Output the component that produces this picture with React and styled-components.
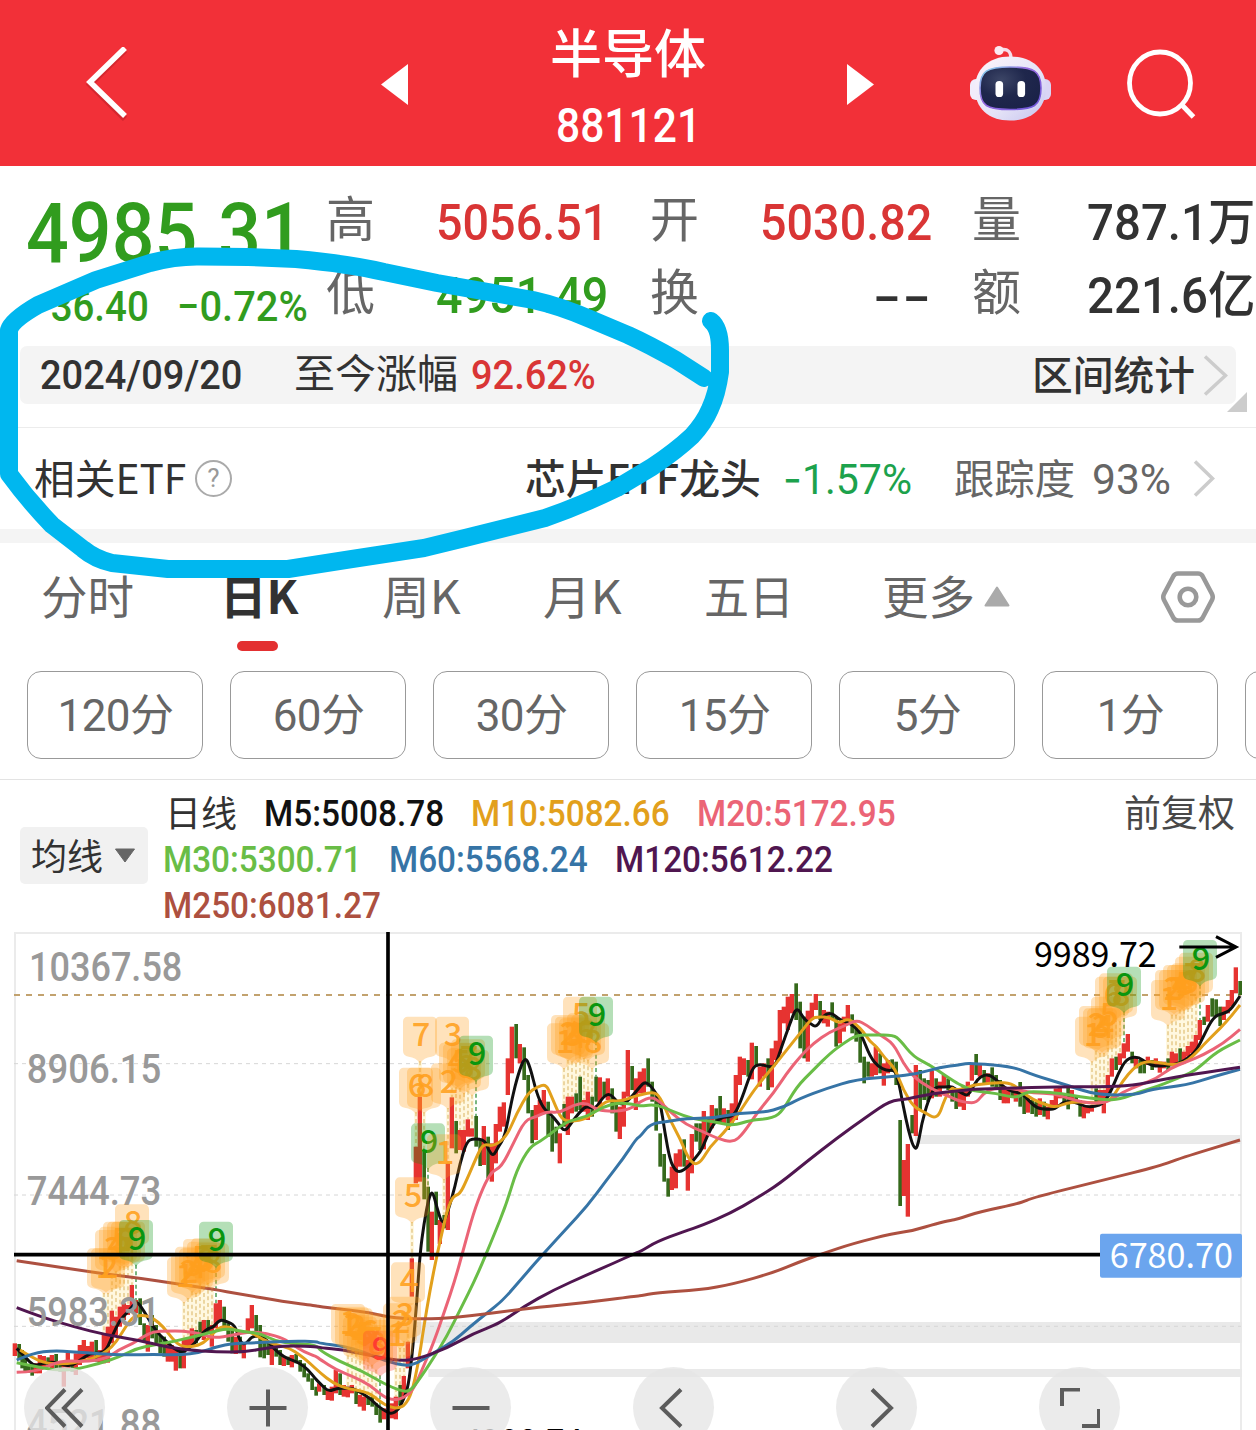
import React, { useLayoutEffect, useRef, useState } from "react";
import styled, { createGlobalStyle, css } from "styled-components";

const colours = {
  brand: "#f23038",
  up: "#d93535",
  down: "#319c1e",
  etfDown: "#1ca24c",
  text: "#323232",
  muted: "#666",
  faint: "#999",
  panel: "#f4f4f4",
};

const cjk = `"Noto Sans CJK SC", sans-serif`;
const din = `Roboto, "Noto Sans CJK SC", sans-serif`;

const GlobalStyle = createGlobalStyle`
  * {
    box-sizing: border-box;
  }

  body {
    margin: 0;
    background: #fff;
    overflow: hidden;
  }

  svg {
    display: block;
  }
`;

const Screen = styled.main`
  position: relative;
  width: 1256px;
  height: 1430px;
  overflow: hidden;
  color: ${colours.text};
  font-family: ${din};
`;

/* Condensed text: squeezed horizontally to fill exactly the width of its slot */
const FitSlot = styled.span`
  display: block;
  flex: none;
  width: ${({ $w }) => $w}px;
  white-space: nowrap;
`;

const FitInner = styled.span`
  display: inline-block;
  transform-origin: 0 50%;
`;

const Fit = ({ w, children, className }) => {
  const ref = useRef(null);
  const [scale, setScale] = useState(1);

  useLayoutEffect(() => {
    setScale(w / ref.current.offsetWidth);
  }, [w, children]);

  return (
    <FitSlot $w={w} className={className}>
      <FitInner ref={ref} style={{ transform: `scaleX(${scale})` }}>
        {children}
      </FitInner>
    </FitSlot>
  );
};

const Dash = styled.span`
  font-family: Inter, sans-serif;
`;

/* ---------- header ---------- */

const Header = styled.header`
  display: grid;
  grid-template-columns: 295px 147px 319px 123px 157px 1fr;
  align-items: center;
  height: 166px;
  padding: 2px 0 0 86px;
  background: ${colours.brand};
`;

const TitleBlock = styled.div`
  width: 200px;
  height: 164px;
  padding-top: 14px;
  display: flex;
  flex-direction: column;
  align-items: center;
  color: #fff;
`;

const Title = styled.h1`
  margin: 0;
  font: 500 52px/70px ${cjk};
`;

const Code = styled(Fit)`
  font-size: 49px;
  font-weight: 500;
  line-height: 80px;
`;

const Robot = () => (
  <svg width="81" height="78" viewBox="970 44 81 78">
    <defs>
      <linearGradient id="shell" x1="0" y1="0" x2="1" y2="1">
        <stop offset="0" stopColor="#fdf5fb" />
        <stop offset="0.6" stopColor="#e4e2f7" />
        <stop offset="1" stopColor="#c5c3ee" />
      </linearGradient>
      <linearGradient id="rim" x1="0" y1="0" x2="1" y2="1">
        <stop offset="0" stopColor="#7fe0ee" />
        <stop offset="0.4" stopColor="#9a6be0" />
        <stop offset="1" stopColor="#6a55d8" />
      </linearGradient>
      <radialGradient id="visor" cx="0.35" cy="0.3" r="0.8">
        <stop offset="0" stopColor="#3c4566" />
        <stop offset="0.5" stopColor="#1f274c" />
        <stop offset="1" stopColor="#1a2148" />
      </radialGradient>
    </defs>
    <path d="M1000 49 C1008 47 1011 51 1011 58" fill="none" stroke="#f6dcea" strokeWidth="3.4" />
    <circle cx="999" cy="49.500" r="4.600" fill="#fbe9f2" />
    <rect x="970" y="78" width="14" height="21" rx="6" fill="#f1ecfb" />
    <rect x="1037" y="78" width="14" height="21" rx="6" fill="#d9d5f5" />
    <path
      d="M1010 55.500 C1033 55.500 1046 69 1046 87 C1046 107 1032 119.500 1010 119.500 C988 119.500 975 107 975 87 C975 69 988 55.500 1010 55.500Z"
      fill="url(#shell)"
    />
    <path
      d="M1010 66 C1034 66 1041 70 1041 87 C1041 105 1034 108.500 1010 108.500 C987 108.500 980 105 980 87 C980 70 987 66 1010 66Z"
      fill="url(#visor)"
      stroke="url(#rim)"
      strokeWidth="1.600"
    />
    <rect x="995.500" y="80" width="7.600" height="16" rx="3.600" fill="#fff" />
    <rect x="1017.500" y="80" width="7.600" height="16" rx="3.600" fill="#fff" />
  </svg>
);

const TopBar = () => (
  <Header>
    <svg width="42" height="74" viewBox="0 1 42 74">
      <path d="M39 2 L4 36.500 L39 71" fill="none" stroke="#a01820" strokeOpacity="0.35" strokeWidth="6" transform="translate(0 2)" />
      <path d="M39 2 L4 36 L39 70" fill="none" stroke="#fff" strokeWidth="5.500" />
    </svg>
    <svg width="27" height="41" viewBox="0 0 27 41">
      <path d="M27 0 V41 L0 20.500Z" fill="#fff" />
    </svg>
    <TitleBlock>
      <Title>半导体</Title>
      <Code w={145}>881121</Code>
    </TitleBlock>
    <svg width="27" height="41" viewBox="0 0 27 41">
      <path d="M0 0 V41 L27 20.500Z" fill="#fff" />
    </svg>
    <Robot />
    <svg width="70" height="70" viewBox="0 0 70 70">
      <ellipse cx="33" cy="34" rx="30.500" ry="31" fill="none" stroke="#fff" strokeWidth="4.800" />
      <path d="M54 55 L66.500 68" stroke="#fff" strokeWidth="5" />
    </svg>
  </Header>
);

/* ---------- quote ---------- */

const QuoteGrid = styled.section`
  display: grid;
  grid-template-columns: 300px 324px 322px 284px;
  height: 180px;
  padding-left: 26px;
`;

const PriceColumn = styled.div`
  padding-top: 31px;
  color: ${colours.down};
  font-weight: 500;
  line-height: 74px;
`;

const Price = styled(Fit)`
  font-size: 84px;
`;

const ChangeRow = styled.div`
  display: flex;
  gap: 28px;
  margin-top: -1px;
  padding-left: 3px;
  font-size: 42px;
`;

const StatColumn = styled.dl`
  display: grid;
  grid-template-columns: ${({ $label }) => $label}px 1fr;
  grid-auto-rows: 73px;
  margin: 0;
  padding-top: 20px;
`;

const StatLabel = styled.dt`
  color: ${colours.muted};
  font: 400 49px/60px ${cjk};
`;

const StatValue = styled.dd`
  display: flex;
  justify-content: flex-end;
  width: 172px;
  margin: 0;
  color: ${({ $tone }) => colours[$tone]};
  font-size: 50.5px;
  font-weight: 500;
  line-height: 73px;
`;

const statColumns = [
  { label: 110, rows: [["高", "5056.51", "up", 172], ["低", "4951.49", "down", 172]] },
  { label: 110, rows: [["开", "5030.82", "up", 172], ["换", "--", "text", 60]] },
  { label: 111, rows: [["量", "787.1万", "text", 168], ["额", "221.6亿", "text", 168]] },
];

const Quote = () => (
  <QuoteGrid>
    <PriceColumn>
      <Price w={278}>4985.31</Price>
      <ChangeRow>
        <Fit w={120}>−36.40</Fit>
        <Fit w={131}>−0.72%</Fit>
      </ChangeRow>
    </PriceColumn>
    {statColumns.map(({ label, rows }) => (
      <StatColumn key={rows[0][0]} $label={label}>
        {rows.map(([name, value, tone, w]) => (
          <React.Fragment key={name}>
            <StatLabel>{name}</StatLabel>
            <StatValue $tone={tone}>
              <Fit w={w}>{value === "--" ? <Dash>{value}</Dash> : value}</Fit>
            </StatValue>
          </React.Fragment>
        ))}
      </StatColumn>
    ))}
  </QuoteGrid>
);

/* ---------- interval + ETF rows ---------- */

const IntervalBar = styled.section`
  position: relative;
  display: flex;
  align-items: center;
  height: 58px;
  margin: 0 20px;
  padding: 0 8px 0 20px;
  border-radius: 7px;
  background: ${colours.panel};
  font-size: 41px;
  font-weight: 500;
  line-height: 55px;
`;

const IntervalLabel = styled(Fit)`
  margin: -7px 13px 0 52px;
  font: 400 40px/51px ${cjk};
`;

const IntervalChange = styled(Fit)`
  color: ${colours.up};
`;

const IntervalLink = styled(Fit)`
  margin: -4px 8px 0 auto;
  font: 500 40px/51px ${cjk};
`;

const Corner = styled.i`
  position: absolute;
  right: -11px;
  bottom: -8px;
  border: 10px solid #ccc;
  border-top-color: transparent;
  border-left-color: transparent;
`;

const Chevron = ({ w, h }) => (
  <svg width={w} height={h} viewBox={`0 0 ${w} ${h}`}>
    <path d={`M2 1.500 L${w - 2.5} ${h / 2} L2 ${h - 1.5}`} fill="none" stroke="#ccc" strokeWidth="3.500" />
  </svg>
);

const EtfRow = styled.section`
  display: grid;
  grid-template-columns: 161px 330px 258px 171px 138px 101px auto;
  align-items: center;
  height: 102px;
  margin-top: 23px;
  padding-left: 34px;
  border-top: 1px solid #ececec;
  font-size: 42px;
`;

const EtfText = styled(Fit)`
  margin-top: -6px;
  color: ${({ $muted }) => ($muted ? colours.muted : colours.text)};
  font: ${({ $bold }) => ($bold ? 500 : 400)} 41px/60px ${cjk};
`;

const EtfNumber = styled(Fit)`
  color: ${({ $down }) => ($down ? colours.etfDown : colours.muted)};
  padding-top: 2px;
  line-height: 60px;
`;

const Help = styled.span`
  display: grid;
  place-items: center;
  width: 37px;
  height: 37px;
  border: 2px solid #aaa;
  border-radius: 50%;
  color: #999;
  font-size: 26px;
  line-height: 33px;
`;

const Band = styled.div`
  height: 14px;
  background: ${colours.panel};
`;

/* ---------- tabs ---------- */

const Tabs = styled.nav`
  display: grid;
  grid-template-columns: 179px 162px 161px 161px 178px 278px auto;
  height: 128px;
  padding: 6px 0 0 41px;
`;

const Tab = styled.div`
  display: flex;
  flex-wrap: wrap;
  align-content: flex-start;
  align-items: center;
  color: ${colours.muted};
  font: 400 46px/90px ${cjk};

  svg {
    margin: 4px 0 0 9px;
  }

  ${({ $active }) =>
    $active &&
    css`
      color: ${colours.text};
      font-weight: 700;

      &::after {
        content: "";
        width: 41px;
        height: 10px;
        margin: 2px 60px 0 17px;
        border-radius: 5px;
        background: #e33031;
      }
    `}
`;

const tabs = [["分时", 93], ["日K", 79], ["周K", 79], ["月K", 79], ["五日", 90], ["更多", 93]];

const Settings = styled.div`
  padding-top: 21px;
`;

const Periods = styled.div`
  display: flex;
  gap: 27px;
  padding: 0 0 20px 27px;
  border-bottom: 1px solid #e3e3e3;
  overflow: hidden;
`;

const Period = styled.button`
  flex: 0 0 176px;
  height: 88px;
  padding: 3px 0 0 1px;
  border: 1px solid #999;
  border-radius: 14px;
  background: #fff;
  color: ${colours.muted};
  font: 400 44px/83px ${din};
  letter-spacing: -0.6px;
`;

const periods = ["120分", "60分", "30分", "15分", "5分", "1分", ""];

/* ---------- moving average legend ---------- */

const Legend = styled.section`
  display: grid;
  grid-template-columns: 143px 1fr auto;
  height: 140px;
  padding: 0 21px 0 20px;
`;

const MaSelect = styled.div`
  display: flex;
  align-items: center;
  gap: 11px;
  width: 128px;
  height: 57px;
  margin-top: 47px;
  padding-left: 11px;
  border-radius: 5px;
  background: #f1f1f1;
  font: 400 36px/52px ${cjk};
`;

const MaLabel = styled(Fit)`
  margin-top: -3px;
`;

const MaRows = styled.div`
  padding-top: 10px;
`;

const MaRow = styled.div`
  display: flex;
  gap: 27px;
  height: 46px;
  font-size: 37.5px;
  font-weight: 500;
  line-height: 46px;
`;

const MaName = styled(Fit)`
  margin-left: 2px;
  font: 400 36px/42px ${cjk};
`;

const MaValue = styled(Fit)`
  color: ${({ $colour }) => $colour};
`;

const Adjust = styled(Fit)`
  padding-top: 10px;
  color: #484848;
  font: 400 37px/43px ${cjk};
`;

const maColours = {
  m5: "#111",
  m10: "#e2a01c",
  m20: "#eb6476",
  m30: "#69bd46",
  m60: "#3674a6",
  m120: "#501650",
  m250: "#ad5040",
};

const maRows = [
  [["M5:5008.78", "m5", 180], ["M10:5082.66", "m10", 199], ["M20:5172.95", "m20", 199]],
  [["M30:5300.71", "m30", 199], ["M60:5568.24", "m60", 199], ["M120:5612.22", "m120", 218]],
  [["M250:6081.27", "m250", 218]],
];

/* ---------- chart ---------- */

// The chart is kept in four pages; each page has its own x origin.
// Candles are "x:high-low" followed by r (up) or g (down).
const pages = [
  {
    x: 0,
    candles:
      "45:1270-1308r 57:1272-1320g 66:1290-1345g 75:1310-1355g 85:1335-1358g 96:1330-1367g 108:1330-1360r 120:1305-1360r 132:1308-1340r 144:1312-1340g 156:1305-1345r 168:1302-1345g 180:1325-1355g 192:1330-1400r 204:1298-1350r 216:1325-1355g 228:1300-1365r 240:1275-1335r 252:1260-1320r 264:1278-1315r 276:1265-1325r 288:1260-1325g 300:1290-1330r 312:1240-1330r 324:1220-1328r 336:1172-1270r 348:1190-1245r 360:1160-1220r 372:1150-1200r 384:1155-1185r 396:1095-1170r 408:1140-1180r 420:1135-1215g 432:1210-1265g 444:1215-1295r 456:1185-1255g 468:1215-1275g 480:1245-1300g 492:1250-1310g 504:1265-1325r 516:1275-1325r 528:1290-1352r 540:1290-1345g 552:1260-1345r 564:1255-1285r 576:1225-1275r 588:1230-1270g 600:1205-1250g 612:1200-1260r 624:1200-1240g 636:1215-1280r 648:1150-1225r 660:1140-1200r 672:1160-1225g 684:1210-1265g 696:1225-1300g 708:1250-1302r 720:1250-1300g 732:1270-1315r 744:1195-1240r 756:1155-1225r 768:1185-1250g 780:1215-1312g 792:1250-1315g 804:1265-1305g 816:1270-1335r 828:1275-1310g 840:1290-1335g 852:1310-1338r 864:1310-1335g 876:1305-1342r 888:1302-1330g 900:1320-1355g 912:1330-1372g 924:1360-1385g 936:1375-1410g 948:1400-1427g 958:1390-1415r",
    m5: "50,1285 75,1310 100,1338 130,1330 160,1325 190,1335 215,1338 240,1320 270,1300 300,1300 320,1290 340,1240 360,1200 380,1180 400,1155 412,1145 430,1170 450,1205 470,1235 490,1255 520,1285 545,1298 560,1290 585,1270 605,1240 625,1225 640,1222 660,1198 680,1205 705,1215 720,1265 735,1275 755,1250 775,1248 800,1258 820,1285 850,1310 875,1320 900,1330 925,1350 945,1375",
    m10: "60,1290 100,1315 140,1330 200,1332 240,1325 280,1315 320,1295 350,1265 380,1215 400,1190 430,1185 460,1195 490,1220 520,1260 545,1280 580,1280 610,1270 640,1240 660,1220 690,1220 720,1238 750,1235 790,1260 830,1275 870,1285 900,1305 930,1330",
    m20: "50,1357 110,1355 160,1330 200,1322 260,1325 320,1315 355,1290 400,1270 430,1250 460,1235 500,1233 550,1233 600,1240 640,1255 700,1245 750,1235 800,1240 850,1255 880,1275 910,1295 950,1310",
    m30: "50,1328 100,1338 160,1350 220,1350 300,1330 360,1310 410,1285 460,1275 520,1265 580,1250 630,1238 680,1225 730,1235 780,1240 830,1265 880,1270 950,1275",
    m60: "50,1320 100,1298 160,1292 220,1295 300,1302 380,1305 460,1303 540,1305 600,1298 650,1280 700,1270 780,1268 880,1263 950,1265",
    m120: "50,1163 120,1190 220,1220 320,1245 420,1262 500,1280 560,1290 650,1296 740,1296 820,1280 880,1277 950,1280",
    m250: "50,1022 150,1037 300,1060 420,1075 520,1090 640,1108 720,1122 850,1145 950,1158",
  },
  {
    x: 960,
    candles:
      "12:1395-1425g 24:1410-1440r 36:1400-1442r 48:1350-1420r 60:1360-1425g 72:1395-1430r 84:1400-1432r 96:1395-1420r 108:1410-1452g 120:1425-1460r 132:1430-1472r 144:1430-1455g 156:1430-1460g 168:1450-1485g 180:1465-1508g 192:1465-1498r 216:1450-1495r 228:1430-1498r 240:1395-1455g 252:1368-1430r 264:1265-1345r 276:1015-1130r 288:680-790r 300:530-785r 312:690-838g 324:800-995g 336:875-1020r 348:815-915g 360:900-972r 372:885-925g 384:730-930r 396:532-685r 408:603-700g 420:630-690r 432:630-695r 444:598-650r 456:625-650r 468:588-680g 480:660-738g 492:618-735r 504:650-775g 516:670-785r 528:612-730r 540:560-635r 552:547-620r 564:415-525r 576:320-460r 588:312-415g 600:372-430r 612:382-480g 624:465-580g 636:570-670g 648:555-660r 660:540-585r 672:510-580r 684:545-650g 696:590-695g 708:620-670g 720:640-730r 732:552-620g 744:530-645r 756:530-580r 768:520-575g 780:470-570g 792:540-575r 804:515-600r 816:530-590g 828:470-545g 840:472-560r 852:485-530g 864:475-540r 876:505-580g 888:540-635g 900:560-657r 912:515-620r 924:390-530r 936:438-510g 948:475-570r",
    m5: "0,1390 25,1415 50,1405 75,1405 100,1405 125,1420 150,1435 175,1460 200,1475 215,1482 235,1470 250,1440 265,1400 278,1290 290,1150 300,1000 312,910 325,840 337,810 350,860 368,918 385,870 405,800 420,730 440,665 460,655 495,660 505,690 520,709 535,680 555,650 575,540 595,460 615,409 630,440 650,520 670,565 690,580 715,610 735,637 760,600 785,570 800,558 825,568 850,530 870,520 890,545 910,555 935,530",
    m10: "0,1358 40,1390 80,1405 110,1410 150,1420 180,1445 210,1462 235,1465 255,1455 275,1420 295,1330 310,1230 330,1110 350,1010 370,920 385,860 400,828 420,822 440,780 470,710 490,670 520,680 560,650 590,580 625,518 650,502 678,492 695,530 720,590 740,605 790,600 820,580 860,540 900,545 940,530",
    m20: "0,1318 50,1350 100,1370 150,1395 190,1430 220,1440 250,1435 280,1410 310,1340 340,1270 375,1170 405,1080 430,990 460,880 490,800 515,755 545,740 580,670 615,600 650,590 680,575 720,578 760,555 800,548 830,570 880,575 930,568",
    m30: "0,1292 60,1325 130,1355 190,1390 240,1412 270,1415 300,1375 340,1315 380,1250 420,1170 470,1070 520,950 560,850 590,750 630,680 660,665 700,635 740,605 800,590 850,560 900,547 950,555",
    m60: "0,1270 70,1278 130,1295 200,1325 260,1338 290,1330 330,1305 400,1265 450,1220 500,1180 550,1140 610,1070 680,990 740,925 800,860 860,780 910,715 950,655",
    m120: "0,1283 70,1290 120,1300 180,1312 240,1322 290,1318 380,1285 460,1240 540,1210 610,1160 700,1110 800,1065 880,1030 950,998",
    m250: "0,1160 80,1170 150,1178 220,1195 350,1197 450,1188 550,1175 650,1162 800,1148 950,1128",
  },
  {
    x: 1920,
    candles:
      "0:455-520r 12:445-520r 24:415-500g 36:485-545g 48:520-632g 60:640-740g 72:702-785g 84:775-830g 96:740-810r 108:700-805r 120:688-740r 132:658-740g 144:720-812r 156:642-760r 168:610-665g 180:610-690g 192:573-688r 204:595-640g 216:555-625r 228:565-605g 240:528-610g 252:565-610r 264:570-630g 276:550-610r 288:465-600r 300:410-495r 312:415-465r 324:420-470g 336:368-478r 348:378-440g 360:440-500r 372:430-470r 384:415-510g 396:385-502r 408:362-420r 420:270-400r 432:260-310r 444:230-330r 456:222-280r 468:190-300g 480:245-385g 492:290-415g 504:272-425r 516:248-300r 528:222-270r 540:243-300g 552:270-310r 564:275-320r 576:247-300g 588:290-380g 600:310-370r 612:290-335r 624:255-310r 636:283-340g 648:320-365g 660:330-428g 672:410-490g 684:425-470g 696:430-470r 708:380-465r 720:400-460g 732:430-497r 744:420-460r 756:418-455g 768:425-495g 780:600-858g 792:720-828r 804:672-890r 816:585-640g 828:435-648r 840:450-570g 852:475-540g 864:480-545g 876:452-535r 888:475-530g 900:485-530r 912:465-500r 924:475-510g 936:500-545g 948:510-567g",
    m5: "0,500 15,485 35,500 60,540 75,640 90,720 105,750 120,757 145,740 165,715 185,690 205,640 225,605 250,590 280,590 300,550 325,480 340,440 360,432 385,440 405,440 425,380 450,310 470,259 490,295 510,310 530,323 550,285 575,278 600,300 620,305 645,320 665,345 690,410 715,440 740,452 765,450 775,480 790,560 805,630 820,682 832,687 845,610 865,540 885,500 910,502 935,498",
    m10: "0,525 45,515 65,540 90,600 120,655 145,715 165,735 185,722 210,680 250,640 290,590 335,520 370,475 400,440 440,390 480,340 515,295 535,290 570,292 595,310 625,295 650,315 670,335 690,365 710,380 735,415 765,445 790,510 820,560 850,575 892,600 915,535 935,502",
    m20: "0,545 35,530 60,545 90,575 140,615 190,635 230,655 280,668 310,640 350,580 400,520 440,460 480,410 520,370 570,335 620,315 650,300 680,315 720,345 760,370 790,430 820,470 870,505 930,530",
    m30: "0,558 50,553 100,575 160,597 220,605 280,618 330,600 400,595 430,570 470,500 520,450 570,400 610,370 650,345 700,345 760,345 780,360 820,410 870,435 920,470 960,495",
    m60: "0,650 30,612 80,605 140,595 220,595 300,578 370,578 430,562 480,535 560,505 650,478 760,470 830,462 900,442 960,434",
    m120: "0,995 50,965 130,935 190,915 270,880 350,835 420,790 500,725 590,655 680,590 750,542 800,538 880,520 960,512",
    m250: "0,1128 50,1118 180,1110 280,1092 400,1058 480,1025 550,1000 640,970 760,940 820,932 890,910 935,900",
  },
  {
    x: 2820,
    candles:
      "60:510-560r 72:500-570r 84:485-530r 96:430-482r 108:402-465g 120:430-470r 132:450-490g 144:460-490r 156:442-500g 168:465-510g 180:480-540g 192:500-550r 204:510-550r 216:500-530g 228:510-545r 240:486-560g 252:530-582g 264:530-578r 276:540-582g 288:545-590g 300:535-585r 312:545-590g 324:560-598r 336:540-570r 348:505-560r 360:500-535r 372:520-550g 384:500-568g 396:510-550r 408:530-550g 420:540-590g 432:560-595r 444:560-580r 456:555-575r 468:505-550g 480:510-550r 492:510-580r 504:465-530r 516:415-470r 528:410-450g 540:400-435r 552:370-415r 564:342-395r 576:395-430g 588:410-445r 600:420-460g 612:420-460g 624:410-435r 636:420-450g 648:415-440r 660:425-458r 672:425-445r 684:415-450g 696:395-430r 708:400-430r 720:385-430g 732:395-425r 744:378-410r 756:365-400r 768:345-390r 780:300-360r 792:290-315g 804:255-305r 816:235-290g 828:238-290g 840:260-318g 852:260-300r 864:240-280r 876:210-260r 888:142-220r 900:183-225g",
    m5: "65,520 85,528 105,490 120,470 145,462 170,480 195,505 220,515 245,520 265,540 290,565 320,568 345,568 370,545 395,545 415,550 435,560 465,560 490,550 510,520 535,460 560,415 595,410 620,430 650,440 690,435 720,430 750,410 770,390 790,350 820,290 850,280 870,272 900,228",
    m10: "45,510 80,505 100,495 130,492 170,487 215,490 245,515 280,540 320,555 350,562 380,548 420,545 470,550 500,545 520,530 550,480 580,445 610,425 650,425 690,435 730,430 760,408 790,375 820,345 860,305 900,255",
    m20: "50,540 80,548 110,548 130,520 160,505 220,505 280,520 340,520 400,540 450,550 500,548 550,515 600,495 650,475 690,445 740,425 790,405 850,370 900,328",
    m30: "70,498 95,512 170,520 230,535 260,515 300,515 360,520 420,530 490,540 540,538 600,515 650,500 700,480 750,460 780,440 830,395 900,360",
    m60: "75,431 100,430 220,440 280,465 380,495 470,525 590,525 630,508 740,495 820,470 900,448",
    m120: "100,508 200,505 350,500 480,500 580,497 660,480 760,462 900,442",
    m250: "50,898 120,875 240,850 280,832 500,778 660,738 720,715 900,660",
  },
];

// Sequence markers 1-9: x of the first one, then the top of each, 12 units apart
const sequences = [
  { x: 312, tops: [985, 985, 930, 920, 905, 905, 905, 853, 900] },
  { x: 552, tops: [1012, 1000, 980, 985, 957, 965, 955, 970, 905] },
  { x: 1044, tops: [1152, 1160, 1165, 1190, 1185, 1180, 1200, 1215, 1232], last: "#ff3b30" },
  { x: 1188, tops: [1190, 1150, 1130, 1027, 772, 443, 290, 443, 610] },
  { x: 1332, tops: [643, 430, 290, 368, 370, 385, 358, 390, 347] },
  { x: 1692, tops: [310, 285, 290, 295, 230, 280, 285, 310, 230] },
  { x: 3276, tops: [290, 258, 265, 265, 230, 170, 160, 170, 140] },
  { x: 3504, tops: [180, 150, 150, 135, 135, 130, 110, 98, 60] },
];

const candles = pages.flatMap((page) =>
  page.candles.split(" ").map((item) => {
    const [, x, high, low, dir] = item.match(/(\d+):(\d+)-(\d+)([rg])/);
    return { x: page.x + Number(x), high: Number(high), low: Number(low), up: dir === "r" };
  })
);

const linePoints = (key) =>
  pages.flatMap((page) =>
    page[key].split(" ").map((pair) => {
      const [x, y] = pair.split(",").map(Number);
      return [page.x + x, y];
    })
  );

// Rounds the corners by running quadratics through the midpoints
const smoothPath = (points) => {
  let d = `M${points[0]}`;
  for (let i = 1; i < points.length - 1; i++) {
    const [x, y] = points[i];
    const [nx, ny] = points[i + 1];
    d += ` Q${x} ${y} ${(x + nx) / 2} ${(y + ny) / 2}`;
  }
  return `${d} L${points[points.length - 1]}`;
};

const highAt = (x) => {
  const near = candles.find((c) => Math.abs(c.x - x) < 7);
  return near ? near.high : 0;
};

const ChartArea = styled.section`
  position: relative;
  height: 510px;
`;

const AxisText = styled.text`
  fill: #999;
  font: 500 121px ${din};
`;

const PlainText = styled.text`
  fill: ${({ $colour }) => $colour};
  font: 400 103px ${cjk};
`;

const MarkerText = styled.text`
  font: 500 98px ${cjk};
  text-anchor: middle;
`;

const Marker = ({ x, top, n, last }) => {
  const final = n === 9;
  const fill = final ? last || "#0a960f" : "#ffa01e";
  return (
    <g>
      <path
        d={`M${x - 37} ${top} h74 a14 14 0 0 1 14 14 v88 q0 15 -17 18 q-22 3 -34 19 q-12 -16 -34 -19 q-17 -3 -17 -18 v-88 a14 14 0 0 1 14 -14Z`}
        fill={fill}
        fillOpacity="0.3"
      />
      <MarkerText x={x + 3} y={top + 89} fill={fill} fillOpacity={final ? 1 : 0.9}>
        {n}
      </MarkerText>
    </g>
  );
};

const axis = [
  ["10367.58", 87, 183, 460],
  ["8906.15", 80, 489, 404],
  ["7444.73", 80, 855, 404],
  ["5983.31", 80, 1217, 400],
  ["4521.88", 80, 1553, 404],
];

const markers = sequences.flatMap(({ x, tops, last }) =>
  tops.map((top, i) => ({ x: x + i * 12, top, n: i + 1, last }))
);

const Plot = () => (
  <svg width="1256" height="510" viewBox="0 0 3768 1530">
    <path d="M45 1530 V39 H3723 V1530" fill="none" stroke="#ebebeb" strokeWidth="6" />
    <g fill="#e9e9e9">
      <rect x="2745" y="645" width="981" height="27" />
      <rect x="1245" y="1206" width="2481" height="63" />
      <rect x="1285" y="1347" width="2441" height="24" />
    </g>
    <g stroke="#d6d6d6" strokeWidth="3" strokeDasharray="12 12">
      <path d="M42 431 H3723" />
      <path d="M42 825 H3723" />
      <path d="M42 1219 H3723" />
    </g>
    <path d="M42 225 H3723" stroke="#c2a26e" strokeWidth="6" strokeDasharray="18 18" />

    {markers.map(({ x, top, n }) => (
      <g key={`${x}-${n}`}>
        {n < 9 && (
          <path d={`M${x} ${top + 134} V${Math.max(highAt(x), top + 134)}`} stroke="#fff8e0" strokeWidth="12" />
        )}
        <path
          d={`M${x} ${top + 134} V${Math.max(highAt(x), top + 134)}`}
          stroke={n === 9 ? "#5fa868" : "#e9cf94"}
          strokeWidth="5"
          strokeDasharray="12 8"
        />
      </g>
    ))}

    {candles.map(({ x, high, low, up }) => (
      <rect
        key={x}
        x={up ? x - 7 : x - 5}
        y={high}
        width={up ? 13 : 11}
        height={low - high}
        fill={up ? "#e63331" : "#35691b"}
      />
    ))}

    <g fill="none" strokeWidth="9" strokeLinejoin="round">
      {Object.keys(maColours).map((key) => (
        <path key={key} d={smoothPath(linePoints(key))} stroke={maColours[key]} />
      ))}
    </g>

    {axis.map(([label, x, y, length]) => (
      <AxisText key={label} x={x} y={y} textLength={length} lengthAdjust="spacingAndGlyphs">
        {label}
      </AxisText>
    ))}

    {markers.map((marker) => (
      <Marker key={`${marker.x}-${marker.n}`} {...marker} />
    ))}

    <PlainText $colour="#000" x="3102" y="142" textLength="368" lengthAdjust="spacingAndGlyphs">
      9989.72
    </PlainText>
    <path d="M3538 81 H3706 M3648 50 L3708 81 L3648 112" fill="none" stroke="#000" strokeWidth="9" />
    <PlainText $colour="#000" x="1389" y="1602" textLength="360" lengthAdjust="spacingAndGlyphs">
      4908.74
    </PlainText>

    <path d="M1164 36 V1530" stroke="#000" strokeWidth="11" />
    <path d="M42 1004 H3723" stroke="#000" strokeWidth="11" />
    <rect x="3300" y="941" width="426" height="132" rx="6" fill="#6ba5ee" />
    <PlainText $colour="#fff" x="3329" y="1043" textLength="370" lengthAdjust="spacingAndGlyphs">
      6780.70
    </PlainText>
  </svg>
);

const Controls = styled.div`
  position: absolute;
  top: 447px;
  left: 24px;
  display: flex;
  gap: 122px;
`;

const RoundButton = styled.button`
  display: grid;
  place-items: center;
  width: 81px;
  height: 81px;
  padding: 0;
  border: 0;
  border-radius: 50%;
  background: rgba(230, 230, 230, 0.78);
`;

const controlIcons = {
  rewind: "M20 1.500 L2 20 L20 38.500 M37 1.500 L19 20 L37 38.500",
  plus: "M1.500 20 H38.500 M20 1.500 V38.500",
  minus: "M1.500 20 H38.500",
  left: "M27 1.500 L8 20 L27 38.500",
  right: "M15 1.500 L34 20 L15 38.500",
  expand: "M20 1.500 H2 V18 M39 21 V38 H22",
};

/* Freehand marker stroke drawn over the top of the screen */
const Doodle = styled.svg`
  position: absolute;
  top: 0;
  left: 0;
  pointer-events: none;
`;

const App = () => (
  <Screen>
    <GlobalStyle />
    <TopBar />
    <Quote />
    <IntervalBar>
      <Fit w={202}>2024/09/20</Fit>
      <IntervalLabel w={164}>至今涨幅</IntervalLabel>
      <IntervalChange w={125}>92.62%</IntervalChange>
      <IntervalLink w={163}>区间统计</IntervalLink>
      <Chevron w={25} h={41} />
      <Corner />
    </IntervalBar>
    <EtfRow>
      <EtfText w={152}>相关ETF</EtfText>
      <Help>?</Help>
      <EtfText w={236} $bold>
        芯片ETF龙头
      </EtfText>
      <EtfNumber w={129} $down>
        <Dash>-</Dash>1.57%
      </EtfNumber>
      <EtfText w={121} $muted>
        跟踪度
      </EtfText>
      <EtfNumber w={79}>93%</EtfNumber>
      <Chevron w={22} h={37} />
    </EtfRow>
    <Band />
    <Tabs>
      {tabs.map(([label, w]) => (
        <Tab key={label} $active={label === "日K"}>
          <Fit w={w}>{label}</Fit>
          {label === "更多" && (
            <svg width="26" height="21" viewBox="0 0 26 21">
              <path d="M13 1.500 L24.500 19.500 H1.500Z" fill="#aaa" stroke="#aaa" strokeWidth="2" strokeLinejoin="round" />
            </svg>
          )}
        </Tab>
      ))}
      <Settings>
        <svg width="56" height="54" viewBox="0 0 56 54" fill="none" stroke="#999" strokeWidth="4.600" strokeLinejoin="round">
          <path d="M18 3.500 H38 Q41 3.500 42.500 6 L52 24 Q53.500 27 52 30 L42.500 48 Q41 50.500 38 50.500 H18 Q15 50.500 13.500 48 L4 30 Q2.500 27 4 24 L13.500 6 Q15 3.500 18 3.500Z" />
          <circle cx="28" cy="27" r="8.300" />
        </svg>
      </Settings>
    </Tabs>
    <Periods>
      {periods.map((label) => (
        <Period key={label}>{label}</Period>
      ))}
    </Periods>
    <Legend>
      <MaSelect>
        <MaLabel w={72}>均线</MaLabel>
        <svg width="22" height="15" viewBox="0 0 22 15">
          <path d="M1.500 1 H20.500 L11 14Z" fill="#666" stroke="#666" strokeLinejoin="round" />
        </svg>
      </MaSelect>
      <MaRows>
        {maRows.map((row, i) => (
          <MaRow key={row[0][0]}>
            {i === 0 && <MaName w={72}>日线</MaName>}
            {row.map(([text, key, w]) => (
              <MaValue key={key} w={w} $colour={maColours[key]}>
                {text}
              </MaValue>
            ))}
          </MaRow>
        ))}
      </MaRows>
      <Adjust w={111}>前复权</Adjust>
    </Legend>
    <ChartArea>
      <Plot />
      <Controls>
        {Object.entries(controlIcons).map(([name, d]) => (
          <RoundButton key={name} aria-label={name}>
            <svg width="40" height="40" viewBox="0 0 40 40">
              <path d={d} fill="none" stroke="#5c5c5c" strokeWidth="4" />
            </svg>
          </RoundButton>
        ))}
      </Controls>
    </ChartArea>
    <Doodle width="1256" height="1430" viewBox="0 0 1256 1430">
      <path
        d="M711 321 Q720 328 720 350 V372 Q717 394 710 409 Q704 423 692 436 Q676 451 652 467 L617 488 Q582 505 545 518 L465 538 L424 548 L352 559 L288 569 H168 L112 563 Q95 559 83 549 L52 525 Q28 500 9 474 V330 Q12 320 38 305 L96 280 L150 263 Q176 256 200 256.500 L248 257 L296 259 Q350 264 384 272 L437 283 L533 300 Q560 306 590 319 L628 335 Q650 345 676 360 L704 378"
        fill="none"
        stroke="#00b7ef"
        strokeWidth="18"
        strokeLinecap="round"
        strokeLinejoin="round"
      />
    </Doodle>
  </Screen>
);

export default App;
